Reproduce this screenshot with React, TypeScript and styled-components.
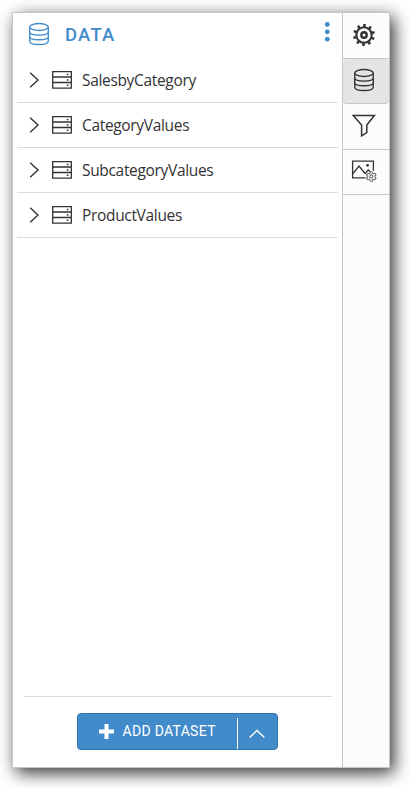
import React from 'react';
import styled, { createGlobalStyle, css } from 'styled-components';

const Global = createGlobalStyle`
  * { box-sizing: border-box; }
  html, body { margin: 0; background: #fff; }
  svg { display: block; flex: none; }
`;

const Page = styled.div`
  width: 410px;
  height: 788px;
  padding: 12px 0 0 12px;
  overflow: hidden;
`;

const Window = styled.div`
  display: flex;
  width: 378px;
  height: 756px;
  border: 1px solid #c6c6c6;
  background: #fff;
  box-shadow: 4px 5px 16px 0 rgba(0, 0, 0, 0.8);
`;

const Panel = styled.main`
  display: flex;
  flex-direction: column;
  width: 329px;
`;

const Header = styled.header`
  display: flex;
  align-items: center;
  height: 45px;
  padding: 0 12px 3px 15px;
  color: #428bca;
`;

const Title = styled.h1`
  flex: 1;
  margin: 1px 0 0 15px;
  font: 500 18.5px/24px Roboto, sans-serif;
  letter-spacing: 1.2px;
`;

const MenuButton = styled.button`
  display: flex;
  margin: 0 0 4px;
  padding: 0;
  border: 0;
  background: none;
  color: inherit;
`;

const List = styled.ul`
  flex: 1;
  margin: 0 4px;
  padding: 0;
  list-style: none;
`;

const Row = styled.li`
  display: flex;
  align-items: center;
  height: 45px;
  padding: 0 0 0 12px;
  border-bottom: 1px solid #dadada;
  color: #333;
`;

const Name = styled.span`
  margin: 0 0 1px 10px;
  font: 400 15.5px/22px "Open Sans", sans-serif;
  letter-spacing: -0.33px;
`;

const Footer = styled.footer`
  display: flex;
  justify-content: center;
  height: 71px;
  margin: 0 10px 0 11px;
  padding: 16px 2px 0 0;
  border-top: 1px solid #dadada;
`;

const SplitButton = styled.div`
  display: flex;
  width: 201px;
  height: 37px;
  border: 1px solid #3175af;
  border-radius: 4px;
  background: #428bca;
  color: #fff;
`;

const AddButton = styled.button`
  display: flex;
  align-items: center;
  width: 159px;
  padding: 0 0 1px 21px;
  border: 0;
  background: none;
  color: inherit;
  font: 400 14px/20px Roboto, sans-serif;
  letter-spacing: 0.3px;
  white-space: nowrap;
  gap: 9px;
`;

const MoreButton = styled.button`
  display: flex;
  flex: 1;
  justify-content: center;
  align-items: center;
  margin-top: 4px;
  padding: 0;
  border: 0;
  border-left: 1px solid #fff;
  background: none;
  color: inherit;
`;

const Sidebar = styled.nav`
  width: 47px;
  border-left: 1px solid #c6c6c6;
  background: #fcfcfc;
`;

const Tab = styled.button<{ $active?: boolean; $height: number }>`
  display: flex;
  align-items: center;
  justify-content: center;
  width: 46px;
  height: ${p => p.$height}px;
  padding: 0 5px 2px 0;
  border: 0;
  border-bottom: 1px solid #c6c6c6;
  background: none;
  color: #333;
  ${p => p.$active && css`
    border-radius: 4px;
    background: #e4e4e4;
  `}
`;

const DatabaseIcon = () => (
  <svg width="22" height="24" viewBox="0 0 22 24" fill="none" stroke="currentColor" strokeWidth="1.35">
    <ellipse cx="11" cy="5" rx="9.3" ry="3.5" />
    <path d="M1.7 5v14c0 4.7 18.6 4.7 18.6 0V5M1.7 9.7c0 4.5 18.6 4.5 18.6 0M1.7 14.4c0 4.5 18.6 4.5 18.6 0" />
  </svg>
);

const DotsIcon = () => (
  <svg width="6" height="20" viewBox="0 0 6 20" fill="currentColor">
    <circle cx="3.3" cy="2.5" r="2.4" />
    <circle cx="3.3" cy="9.8" r="2.4" />
    <circle cx="3.3" cy="17.2" r="2.4" />
  </svg>
);

const ChevronRight = () => (
  <svg width="11" height="16" viewBox="0 0 11 16" fill="none" stroke="currentColor" strokeWidth="1.4">
    <path d="M1.2 .8 9 8l-7.8 7.2" />
  </svg>
);

const ServerIcon = styled(({ className }: { className?: string }) => (
  <svg className={className} width="20" height="18" viewBox="0 0 20 18" fill="none" stroke="currentColor">
    <path d="M.7 .6h18.6v16.5H.7z" strokeWidth="1.3" />
    <path d="M1 6h18M1 11.5h18" strokeWidth="1.4" />
    <path d="M14.8 3.5h1.6M14.8 9h1.6M14.8 14.3h1.6" strokeWidth="1.6" />
  </svg>
))`
  margin-left: 12px;
`;

const teeth = Array.from({ length: 10 }, (_, i) => i * 36 + 3);

const GearIcon = () => (
  <svg width="24" height="24" viewBox="0 0 24 24" fill="none" stroke="currentColor">
    <circle cx="12" cy="12" r="7.7" strokeWidth="2.1" />
    <circle cx="12" cy="12" r="2.7" strokeWidth="2.4" />
    {teeth.map(angle => (
      <path key={angle} d="M12 1v3.2" strokeWidth="2.5" transform={`rotate(${angle} 12 12)`} />
    ))}
  </svg>
);

const FilterIcon = () => (
  <svg width="24" height="24" viewBox="0 0 24 24" fill="none" stroke="currentColor" strokeWidth="1.5">
    <path d="M1.2 1.4h21.2l-7.6 9.6v7.6l-5.2 3.2V11z" />
  </svg>
);

const PictureGearIcon = () => (
  <svg width="26" height="22" viewBox="0 0 26 22" fill="none" stroke="currentColor" strokeWidth="1.3">
    <path d="M14.5 17.8H1.6V1.2h20.8v9.5" />
    <path d="m2 13.5 6-7.5 6 7.5 3.3-3.6 2 1.8" />
    <circle cx="16.5" cy="5.3" r="1.4" fill="currentColor" stroke="none" />
    <g color="#707070" strokeWidth="1.1" strokeLinejoin="round">
      <path d="M19.3 11.8h1.9l.4 1.5.9.5 1.5-.5 1 1.6-1.1 1.1v1l1.1 1.1-1 1.6-1.5-.4-.9.5-.4 1.5h-1.9l-.4-1.5-.9-.5-1.5.4-1-1.6 1.1-1.1v-1l-1.1-1.1 1-1.6 1.5.5.9-.5z" fill="#fcfcfc" stroke="currentColor" />
      <circle cx="20.2" cy="16.5" r="1.6" stroke="currentColor" />
    </g>
  </svg>
);

const PlusIcon = () => (
  <svg width="15" height="15" viewBox="0 0 15 15" fill="currentColor">
    <path d="M5.5 0h4v5.5H15v4H9.5V15h-4V9.5H0v-4h5.5z" />
  </svg>
);

const ChevronUp = () => (
  <svg width="16" height="9" viewBox="0 0 16 9" fill="none" stroke="currentColor" strokeWidth="1.4">
    <path d="m.6 8.4 7.4-7 7.4 7" />
  </svg>
);

const datasets = ['SalesbyCategory', 'CategoryValues', 'SubcategoryValues', 'ProductValues'];

export default function App() {
  return (
    <Page>
      <Global />
      <Window>
        <Panel>
          <Header>
            <DatabaseIcon />
            <Title>DATA</Title>
            <MenuButton aria-label="More options"><DotsIcon /></MenuButton>
          </Header>
          <List>
            {datasets.map(name => (
              <Row key={name}>
                <ChevronRight />
                <ServerIcon />
                <Name>{name}</Name>
              </Row>
            ))}
          </List>
          <Footer>
            <SplitButton>
              <AddButton><PlusIcon />ADD DATASET</AddButton>
              <MoreButton aria-label="More ways to add"><ChevronUp /></MoreButton>
            </SplitButton>
          </Footer>
        </Panel>
        <Sidebar>
          <Tab $height={46} aria-label="Properties"><GearIcon /></Tab>
          <Tab $height={45} $active aria-label="Data"><DatabaseIcon /></Tab>
          <Tab $height={46} aria-label="Filter"><FilterIcon /></Tab>
          <Tab $height={45} aria-label="Image settings"><PictureGearIcon /></Tab>
        </Sidebar>
      </Window>
    </Page>
  );
}
